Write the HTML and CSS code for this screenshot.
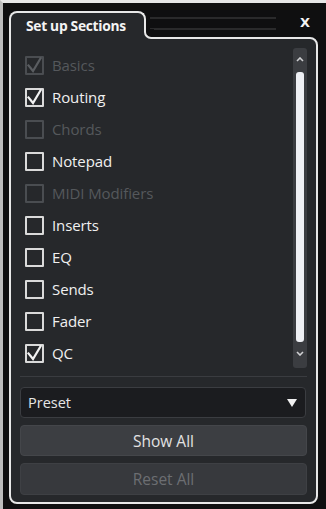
FILE: index.html
```html
<!DOCTYPE html>
<html>
<head>
<meta charset="utf-8">
<link rel="stylesheet" href="styles.css">
</head>
<body>
<div class="frame">
  <div class="head">
    <div class="tab">Set up Sections</div>
    <div class="head-rest">
      <div class="grip"></div>
      <div class="close">X</div>
    </div>
  </div>
  <div class="panel">
    <div class="list-area">
      <ul class="list">
        <li class="row disabled"><span class="box"><svg viewBox="0 0 19 19" width="19" height="19"><polyline points="3.5,9.5 8,15 15.5,2.5" /></svg></span><span class="label">Basics</span></li>
        <li class="row"><span class="box"><svg viewBox="0 0 19 19" width="19" height="19"><polyline points="3.5,9.5 8,15 15.5,2.5" /></svg></span><span class="label">Routing</span></li>
        <li class="row disabled"><span class="box"></span><span class="label">Chords</span></li>
        <li class="row"><span class="box"></span><span class="label">Notepad</span></li>
        <li class="row disabled"><span class="box"></span><span class="label">MIDI Modifiers</span></li>
        <li class="row"><span class="box"></span><span class="label">Inserts</span></li>
        <li class="row"><span class="box"></span><span class="label">EQ</span></li>
        <li class="row"><span class="box"></span><span class="label">Sends</span></li>
        <li class="row"><span class="box"></span><span class="label">Fader</span></li>
        <li class="row"><span class="box"><svg viewBox="0 0 19 19" width="19" height="19"><polyline points="3.5,9.5 8,15 15.5,2.5" /></svg></span><span class="label">QC</span></li>
      </ul>
      <div class="scrollbar">
        <div class="arrow"><svg viewBox="0 0 8 5" width="8" height="5"><polyline points="1,4 4,1 7,4" /></svg></div>
        <div class="thumb"></div>
        <div class="arrow"><svg viewBox="0 0 8 5" width="8" height="5"><polyline points="1,1 4,4 7,1" /></svg></div>
      </div>
    </div>
    <div class="sep"></div>
    <div class="controls">
      <div class="select"><span>Preset</span><svg viewBox="0 0 10 8" width="10" height="8"><polygon points="0,0 10,0 5,8" /></svg></div>
      <div class="btn">Show All</div>
      <div class="btn off">Reset All</div>
    </div>
  </div>
</div>
</body>
</html>
```

FILE: styles.css
```css
html, body {
  margin: 0;
  padding: 0;
  background: #0f0f10;
}
body {
  width: 326px;
  height: 509px;
  overflow: hidden;
  font-family: "Open Sans", "Noto Sans", sans-serif;
}
.frame {
  box-sizing: border-box;
  width: 326px;
  height: 509px;
  border-top: 3px solid #e6e6e6;
  border-left: 3px solid #bdbdbd;
  padding: 8px 8px 5px 6px;
  background: #0f0f10;
  display: flex;
  flex-direction: column;
}
.head {
  display: flex;
  height: 26px;
  flex: none;
}
.tab {
  position: relative;
  z-index: 1;
  box-sizing: border-box;
  width: 137px;
  height: 28px;
  border: 2px solid #e8e8e8;
  border-bottom: 0;
  border-radius: 8px 8px 0 0;
  background: #26282b;
  color: #f4f4f4;
  font-weight: 700;
  font-size: 13.8px;
  line-height: 24px;
  padding: 1px 0 0 15px;
  letter-spacing: -0.3px;
  white-space: nowrap;
}
.tab::before,
.tab::after {
  content: "";
  position: absolute;
  left: 133px;
  top: 18px;
  width: 8px;
  height: 8px;
}
.tab::before {
  background: #26282b;
}
.tab::after {
  box-sizing: border-box;
  width: 10px;
  height: 10px;
  border-left: 2px solid #e8e8e8;
  border-bottom: 2px solid #e8e8e8;
  border-bottom-left-radius: 7px;
  background: #0f0f10;
  top: 16px;
}
.head-rest {
  flex: 1;
  display: flex;
  align-items: flex-start;
}
.grip {
  box-sizing: border-box;
  width: 126px;
  height: 13px;
  margin: 6px 0 0 4px;
  border-top: 2px solid #2a2a2b;
  border-bottom: 2px solid #2a2a2b;
}
.close {
  margin: 4px 5px 0 auto;
  width: 16px;
  text-align: center;
  color: #f4f4f4;
  font-weight: 700;
  font-size: 13px;
  line-height: 16px;
  font-family: "DejaVu Sans", sans-serif;
}
.panel {
  flex: 1;
  box-sizing: border-box;
  border: 2px solid #e8e8e8;
  border-radius: 0 8px 8px 8px;
  background: #26282b;
  display: flex;
  flex-direction: column;
}
.list-area {
  display: flex;
  padding: 10px 9px 0 14px;
}
.list {
  list-style: none;
  margin: 0;
  padding: 0;
  flex: 1;
}
.row {
  height: 32px;
  display: flex;
  align-items: center;
  gap: 8px;
  color: #f0f0f0;
  font-size: 15px;
  letter-spacing: -0.1px;
}
.box {
  box-sizing: border-box;
  width: 19px;
  height: 19px;
  border: 2px solid #dadada;
  border-radius: 1px;
  position: relative;
  flex: none;
}
.box svg {
  position: absolute;
  left: -2px;
  top: -2px;
  overflow: visible;
}
.box polyline {
  fill: none;
  stroke: #f2f2f2;
  stroke-width: 2.2;
  stroke-linecap: square;
}
.row.disabled {
  color: #55585c;
}
.row.disabled .box {
  border-color: #4a4d51;
}
.row.disabled .box polyline {
  stroke: #5a5d61;
}
.scrollbar {
  width: 14px;
  height: 320px;
  margin-top: -1px;
  background: #3b3d41;
  border-radius: 3px;
  display: flex;
  flex-direction: column;
  align-items: center;
}
.arrow {
  height: 22px;
  display: flex;
  align-items: center;
  justify-content: center;
}
.arrow polyline {
  fill: none;
  stroke: #cfd0d3;
  stroke-width: 1.6;
}
.thumb {
  width: 8px;
  height: 270px;
  margin-top: 2px;
  background: #eef0f4;
  border-radius: 3px;
}
.sep {
  height: 1px;
  background: #3a3c40;
  margin: 7px 9px 0 9px;
}
.controls {
  display: flex;
  flex-direction: column;
  gap: 7px;
  padding: 10px 9px 7px 9px;
}
.select {
  box-sizing: border-box;
  height: 31px;
  margin-right: 1px;
  background: #1b1c1f;
  border: 1px solid #3b3d41;
  border-radius: 4px;
  display: flex;
  align-items: center;
  justify-content: space-between;
  padding: 0 8px 0 7px;
  color: #e6e6e6;
  font-size: 14.5px;
}
.select polygon {
  fill: #f0f0f0;
}
.btn {
  box-sizing: border-box;
  height: 31px;
  background: #3c3e42;
  border: 1px solid #44464a;
  border-radius: 4px;
  display: flex;
  align-items: center;
  justify-content: center;
  color: #e2e2e2;
  font-size: 15.5px;
}
.btn.off {
  height: 32px;
  background: #37393d;
  border-color: #3e4044;
  color: #6c6e72;
}
```
